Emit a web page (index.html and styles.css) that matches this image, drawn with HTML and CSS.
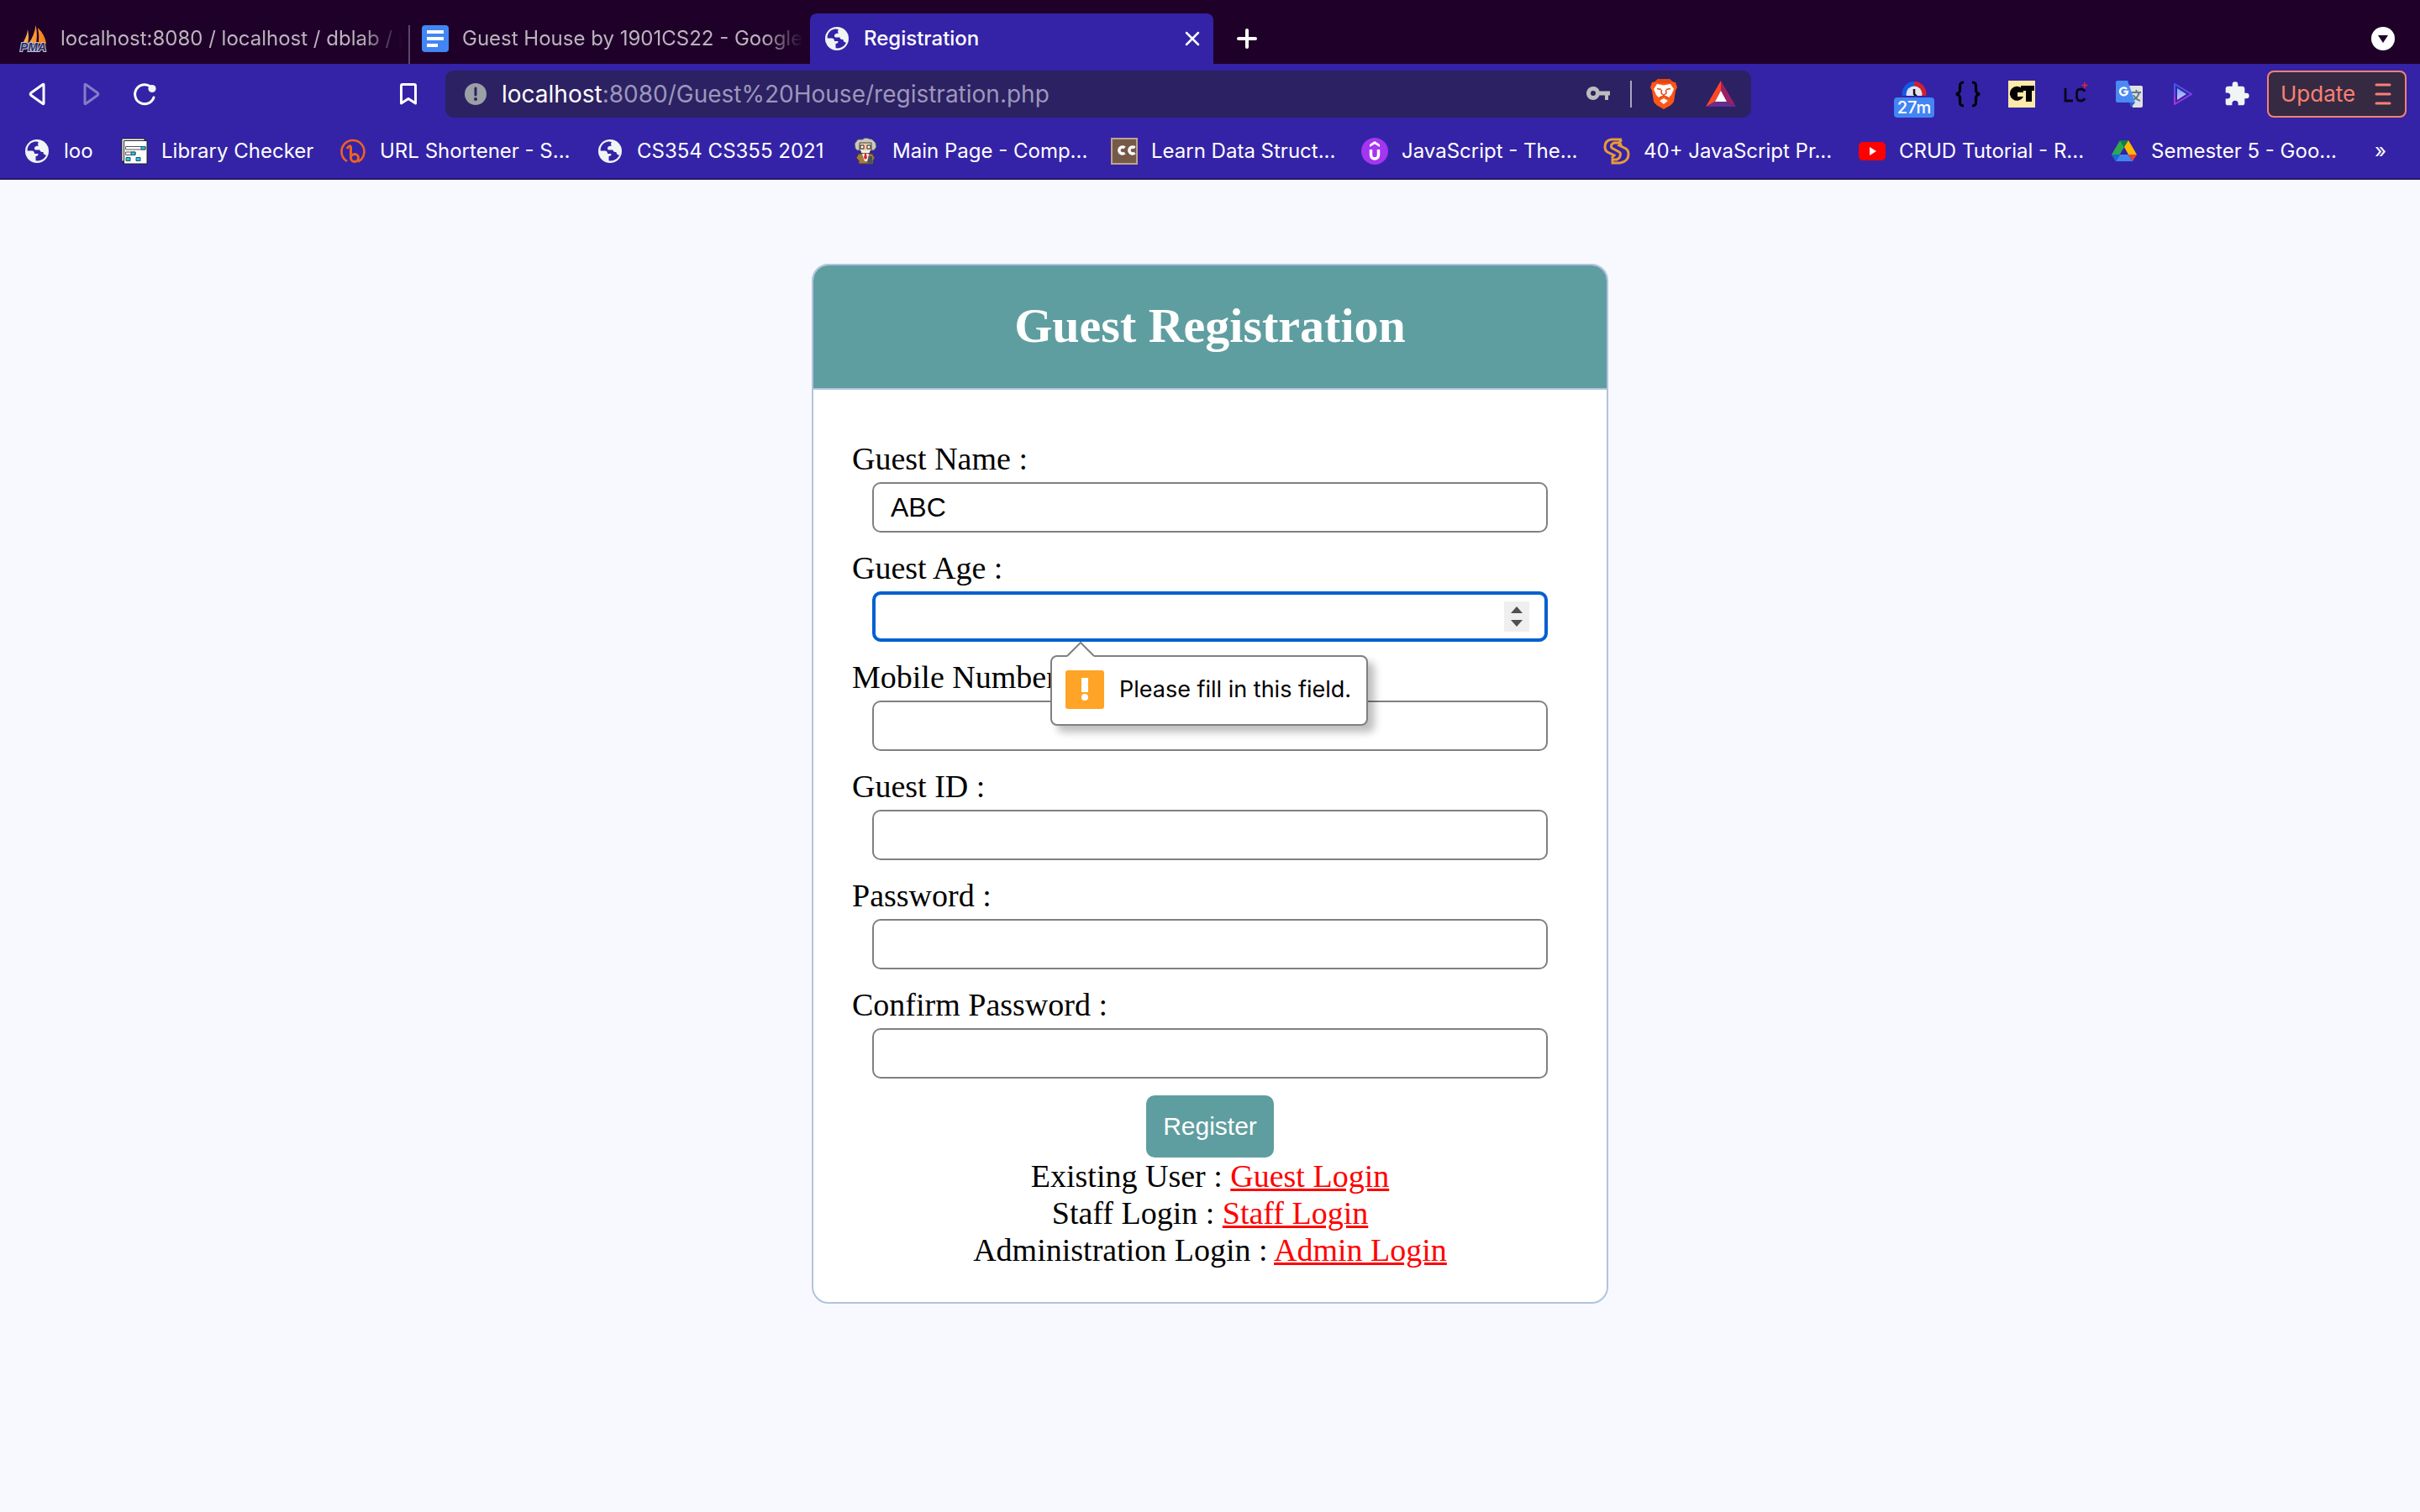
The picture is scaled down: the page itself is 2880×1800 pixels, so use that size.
FILE: index.html
```html
<!DOCTYPE html>
<html lang="en">
<head>
<meta charset="utf-8">
<title>Registration</title>
<link rel="stylesheet" href="styles.css">
</head>
<body>
<svg class="defs" aria-hidden="true">
  <symbol id="globe" viewBox="0 0 32 32">
    <circle cx="16" cy="16" r="14" fill="#f1f3f4"/>
    <path fill="var(--hole)" d="M14 4.500C8 5 4.400 10 4.600 15.500L10 15.500C12 15.500 13 17 13 19L17.500 19C17.500 21 16.500 22 14.500 22L14.500 27.300C20 28.200 25.500 25 27 20.500C25.500 20.500 24 20 23.500 18L23.500 17C21 17 19.500 16.500 19.500 14.500L14 14.500C12.500 13.500 12.500 11 15 10L18 9.500C17 8.500 16.500 6.500 18 5.200C16.500 4.500 15.500 4.400 14 4.500Z"/>
  </symbol>
</svg>

<header class="browser">
  <nav class="tabs" aria-label="Tabs">
    <a class="tab" href="#dblab">
      <svg class="icon spill" viewBox="0 0 32 32"><defs><linearGradient id="sail"><stop offset="0" stop-color="#ffb45c"/><stop offset="1" stop-color="#f57c10"/></linearGradient></defs><path fill="url(#sail)" d="M2 23Q8 14 9 5Q11 14 9 22ZM10 22Q17 12 18.500 0Q21 10 19 22ZM21 3Q30 12 31 22L22 22Q23 12 21 3Z"/><text x="0" y="31" class="pma">PMA</text></svg>
      <span class="tab-title">localhost:8080 / localhost / dblab / p</span>
    </a>
    <a class="tab tab-split" href="#docs">
      <svg class="icon" viewBox="0 0 32 32"><rect width="32" height="32" rx="4" fill="#4285f4"/><path fill="#fff" d="M6 6h20v4H6zM6 14h20v4H6zM6 22h13v4H6z"/></svg>
      <span class="tab-title">Guest House by 1901CS22 - Google</span>
    </a>
    <div class="tab tab-active">
      <svg class="icon"><use href="#globe"/></svg>
      <span class="tab-title">Registration</span>
      <button class="plain" type="button" aria-label="Close tab"><svg class="close" viewBox="0 0 18 18"><path d="M2 2L16 16M16 2L2 16" stroke="#fff" stroke-width="2.500" stroke-linecap="round"/></svg></button>
    </div>
    <button class="plain new-tab" type="button" aria-label="New tab"><svg class="plus" viewBox="0 0 24 24"><path d="M12 2V22M2 12H22" stroke="#fff" stroke-width="4" stroke-linecap="round"/></svg></button>
    <button class="plain tab-search" type="button" aria-label="Search tabs"><svg class="round" viewBox="0 0 28 28"><circle cx="14" cy="14" r="14" fill="#fff"/><path d="M8 10H20L14 19Z" fill="#1f0029"/></svg></button>
  </nav>

  <div class="toolbar">
    <div class="nav-side">
      <button class="plain" type="button" aria-label="Back"><svg class="icon" viewBox="0 0 32 32"><path d="M24 5V27Q24 28 23 27.500L9 17.500Q7.500 16 9 14.500L23 4.500Q24 4 24 5Z" fill="none" stroke="#fff" stroke-width="3" stroke-linejoin="round"/></svg></button>
      <button class="plain dim" type="button" aria-label="Forward"><svg class="icon" viewBox="0 0 32 32"><path d="M9 5V27Q9 28 10 27.500L24 17.500Q25.500 16 24 14.500L10 4.500Q9 4 9 5Z" fill="none" stroke="#fff" stroke-width="3" stroke-linejoin="round"/></svg></button>
      <button class="plain" type="button" aria-label="Reload"><svg class="icon" viewBox="0 0 32 32"><path d="M23 7A11.500 11.500 0 1 0 27 20" fill="none" stroke="#fff" stroke-width="3" stroke-linecap="round"/><circle cx="25" cy="9.500" r="4.600" fill="#f1f3f4"/></svg></button>
      <button class="plain mark" type="button" aria-label="Bookmark this page"><svg class="icon" viewBox="0 0 32 32"><path d="M7.500 27V6Q7.500 4.500 9 4.500H23Q24.500 4.500 24.500 6V27L16 21.500Z" fill="none" stroke="#fff" stroke-width="3" stroke-linejoin="round"/></svg></button>
    </div>
    <div class="address">
      <svg class="info" viewBox="0 0 26 26"><circle cx="13" cy="13" r="13" fill="#9aa0a6"/><path d="M13 6V14" stroke="#2c2163" stroke-width="3" stroke-linecap="round"/><circle cx="13" cy="19" r="2" fill="#2c2163"/></svg>
      <span class="url"><b>localhost</b>:8080/Guest%20House/registration.php</span>
      <svg class="icon" viewBox="0 0 32 32"><path fill="#bcbcbc" fill-rule="evenodd" d="M10 7a8 8 0 1 0 7.500 10.500H24V23h4v-5.500h2v-5H17.500A8 8 0 0 0 10 7ZM10 12a3 3 0 1 1 0 6a3 3 0 0 1 0-6Z"/></svg>
      <span class="rule"></span>
      <svg class="brave" viewBox="0 0 32 36"><path fill="#ff5517" d="M9 0H23L27 3.500L30 4L32 10L30 14L28 27Q27 29 24 31.500L16 36L8 31.500Q5 29 4 27L2 14L0 10L2 4L5 3.500Z"/><path fill="#e8450f" d="M9 0H23L27 4L22 5H10L5 4Z"/><path fill="#fff" d="M8 6L16 7.500L24 6L28 12L25 19L22 22L16 21L10 22L7 19L4 12ZM16 23L21 26L16 30L11 26Z"/><path d="M8 11.500L13 12.500M24 11.500L19 12.500M13.500 13L13 17L16 19.500L19 17L18.500 13M11 22L16 20L21 22" fill="none" stroke="#e8450f" stroke-width="1.500"/></svg>
      <svg class="bat" viewBox="0 0 36 32"><path fill="#ff4724" d="M18 0V12L11 25L0 31Z"/><path fill="#9e1f63" d="M18 0V12L25 25L36 31Z"/><path fill="#662d91" d="M0 31L11 25H25L36 31Z"/><path fill="#fff" d="M18 12L25 25H11Z"/></svg>
    </div>
    <div class="ext-side">
      <button class="plain timer" type="button" aria-label="Timer"><svg class="icon" viewBox="0 0 32 32"><path fill="#1558e0" d="M16 1A14.500 14.500 0 0 0 16 30Z"/><path fill="#cf2130" d="M16 1A14.500 14.500 0 0 1 16 30Z"/><circle cx="16" cy="16" r="9.500" fill="#e2e2f4"/><path d="M16 10V16L19 19" stroke="#111" stroke-width="2.500" fill="none"/></svg><span class="badge">27m</span></button>
      <button class="plain" type="button" aria-label="JSON formatter"><svg class="icon" viewBox="0 0 32 32"><path d="M11 2Q6 2 6.500 7V11Q6.500 15 2 16Q6.500 17 6.500 21V25Q6 30 11 30M21 2Q26 2 25.500 7V11Q25.500 15 30 16Q25.500 17 25.500 21V25Q26 30 21 30" fill="none" stroke="#000" stroke-width="3.200"/></svg></button>
      <button class="plain" type="button" aria-label="CT"><svg class="icon" viewBox="0 0 32 32"><rect width="32" height="32" fill="#ffe9a8"/><path d="M17 10A8.500 8.500 0 1 0 18 19H11V14H18Z"/><path d="M15 6H31V12H28V25H21V12H15Z"/></svg></button>
      <button class="plain" type="button" aria-label="LC"><svg class="icon" viewBox="0 0 32 32"><path d="M4 9V24H13M27 13Q26 10 22 10Q17.500 10 17.500 15V19Q17.500 24 22 24Q26 24 27 21" fill="none" stroke="#0b0618" stroke-width="2.800"/><path d="M27 2V9M23.500 5.500H30.500" stroke="#f0203c" stroke-width="1.500"/></svg></button>
      <button class="plain" type="button" aria-label="Translate"><svg class="icon" viewBox="0 0 32 32"><path fill="#dfe1e3" d="M14 6H30Q32 6 32 8V30Q32 32 30 32H20Z"/><path d="M19 14H30M24.500 11V14M28 14Q26 21 19 24M21 17Q23 22 29 24" stroke="#607988" stroke-width="2" fill="none"/><path fill="#2c5fc4" d="M16 26H23L18 32Z"/><path fill="#4a8af4" d="M2 0H14L23 26H2Q0 26 0 24V2Q0 0 2 0Z"/><path d="M13 10A4.500 4.500 0 1 0 14 13H9.500" stroke="#fff" stroke-width="2.400" fill="none"/></svg></button>
      <button class="plain" type="button" aria-label="Player"><svg class="icon" viewBox="0 0 32 32"><defs><linearGradient id="play" x2="0" y2="1"><stop offset="0" stop-color="#3d5bf0"/><stop offset="1" stop-color="#b32ee0"/></linearGradient><linearGradient id="core" x2="0" y2="1"><stop offset="0" stop-color="#5ab4ff"/><stop offset="1" stop-color="#e7b5ff"/></linearGradient></defs><path d="M6 4L26 16L6 28Z" fill="none" stroke="url(#play)" stroke-width="2" stroke-linejoin="round"/><path d="M9 9L20 16L9 23Z" fill="url(#core)"/></svg></button>
      <button class="plain" type="button" aria-label="Extensions"><svg class="icon" viewBox="0 0 24 24"><path fill="#f1f3f4" d="M20.500 11H19V7c0-1.100-.9-2-2-2h-4V3.500a2.500 2.500 0 0 0-5 0V5H4c-1.100 0-2 .9-2 2v3.800h1.500a2.700 2.700 0 0 1 0 5.400H2V20c0 1.100.9 2 2 2h3.800v-1.500a2.700 2.700 0 0 1 5.400 0V22H17c1.100 0 2-.9 2-2v-4h1.500a2.500 2.500 0 0 0 0-5Z"/></svg></button>
      <button class="update" type="button">Update <svg class="menu" viewBox="0 0 20 28"><path d="M2 3H18M2 14H18M2 25H18" stroke="#fb8074" stroke-width="3" stroke-linecap="round"/></svg></button>
    </div>
  </div>

  <nav class="bookmarks" aria-label="Bookmarks">
    <a href="#loo"><svg class="icon"><use href="#globe"/></svg>loo</a>
    <a href="#library"><svg class="icon" viewBox="0 0 32 32"><path fill="#fff" stroke="#222" d="M1 1H28V28H1Z"/><path fill="#fff" stroke="#222" d="M3.500 3.500H31V31H3.500Z"/><path fill="#fff" stroke="#555" d="M5.500 10.500H29V14H5.500ZM5.500 17H17V20.500H5.500Z"/><path fill="#22c8e4" stroke="#256" d="M24 10.500H29V14H24ZM12 17H17V20.500H12ZM6 23.500H11V27.500H6ZM18 23.500H23V27.500H18Z"/></svg>Library Checker</a>
    <a href="#url"><svg class="icon" viewBox="0 0 32 32"><path d="M9 28A13.500 13.500 0 1 1 22 28.500" fill="none" stroke="#ee6123" stroke-width="2.600"/><path d="M9 13Q12 8 13.500 11V24A4.500 4.500 0 1 0 18 19.500Q15.500 19.500 13.500 22" fill="none" stroke="#ee6123" stroke-width="3"/></svg>URL Shortener - S...</a>
    <a href="#cs354"><svg class="icon"><use href="#globe"/></svg>CS354 CS355 2021</a>
    <a href="#comp"><svg class="icon" viewBox="0 0 32 32"><path fill="#c8c8c8" stroke="#555" d="M4 13L3 7L7 2L12 2L16 0L24 2L28 6L29 11L26 15H6Z"/><path fill="#f4c9a2" stroke="#443" d="M9 6H23V15L19 19H13L9 15Z"/><path fill="#fff" stroke="#222" d="M10 9H14V13H10ZM18 9H22V13H18Z"/><path fill="#eee" d="M11 15H21V18H11Z"/><path fill="#a8793c" stroke="#443" d="M8 19H24L27 24L25 27V31H8V27L5 24Z"/><path fill="#fff" d="M12 19H20L18 28H15Z"/><path fill="#d22" d="M15 19H17L18 24L16 26L14 24Z"/><path fill="#456" d="M20 22H24V30H18Z"/></svg>Main Page - Comp...</a>
    <a href="#learn"><svg class="icon" viewBox="0 0 32 32"><rect x="1" y="1" width="30" height="30" fill="#755a48" stroke="#bea390" stroke-width="2"/><path d="M16.500 12A4 4 0 1 0 16.500 18M28.500 12A4 4 0 1 0 28.500 18" fill="none" stroke="#fff" stroke-width="3.500"/></svg>Learn Data Struct...</a>
    <a href="#js"><svg class="icon" viewBox="0 0 32 32"><circle cx="16" cy="16" r="16" fill="#a435f0"/><path fill="#fff" d="M16 4L22 8V11L16 7.500L10 11V8Z"/><path d="M11.500 14V20.500A4.500 4.500 0 0 0 20.500 20.500V14" fill="none" stroke="#fff" stroke-width="3.500"/></svg>JavaScript - The...</a>
    <a href="#projects"><svg class="icon" viewBox="0 0 32 32"><path d="M22 2H10Q2 3 2 11Q2 15 5 17L13 21L10 24M22 2L19 6H13Q8 8 10 12L19 17Q22 19 19 24L16 26H11V30H20Q30 28 30 20Q30 15 27 13L19 9L22 7" fill="none" stroke="#e79b38" stroke-width="3"/></svg>40+ JavaScript Pr...</a>
    <a href="#crud"><svg class="icon" viewBox="0 0 32 32"><rect y="5" width="32" height="22" rx="5" fill="#f00"/><path fill="#fff" d="M13 11L21 16L13 21Z"/></svg>CRUD Tutorial - R...</a>
    <a href="#semester"><svg class="icon" viewBox="0 0 32 32"><path fill="#2da94f" d="M11 3L1 20L6 28L16 11Z"/><path fill="#0b8043" d="M11 3H21L16 11Z"/><path fill="#ffba00" d="M21 3L31 20H21L16 11Z"/><path fill="#4285f4" d="M6 28L11 20H21L26 28Z"/><path fill="#1967d2" d="M1 20H11L6 28Z"/><path fill="#ea4335" d="M21 20H31L26 28Z"/></svg>Semester 5 - Goo...</a>
    <button class="plain more" type="button" aria-label="More bookmarks">»</button>
  </nav>
</header>

<main class="page">
  <section class="card">
    <h1 class="card-title">Guest Registration</h1>
    <form class="form" action="#" method="post" novalidate>
      <div class="field">
        <label for="name">Guest Name :</label>
        <div class="control"><input id="name" type="text" value="ABC"></div>
      </div>
      <div class="field">
        <label for="age">Guest Age :</label>
        <div class="control">
          <input id="age" class="current" type="number" required>
          <svg class="spinner" viewBox="0 0 30 36" aria-hidden="true"><rect width="30" height="36" rx="1" fill="#efefef"/><path fill="#505050" d="M8 14L15 6L22 14ZM8 22H22L15 30Z"/></svg>
          <div class="hint" role="alert">
            <svg class="pointer" viewBox="0 0 32 18" aria-hidden="true"><path d="M0 17L16 1L32 17V18H0Z" fill="#fff"/><path d="M0 17L16 1L32 17" fill="none" stroke="#808080" stroke-width="2"/></svg>
            <svg class="warn" viewBox="0 0 46 46"><rect width="46" height="46" rx="3" fill="#ffa426"/><path fill="#fff" d="M19 9H27V26H19Z"/><circle cx="23" cy="32" r="4" fill="#fff"/></svg>
            Please fill in this field.
          </div>
        </div>
      </div>
      <div class="field">
        <label for="mobile">Mobile Number :</label>
        <div class="control"><input id="mobile" type="text"></div>
      </div>
      <div class="field">
        <label for="guest-id">Guest ID :</label>
        <div class="control"><input id="guest-id" type="text"></div>
      </div>
      <div class="field">
        <label for="password">Password :</label>
        <div class="control"><input id="password" type="password"></div>
      </div>
      <div class="field">
        <label for="confirm">Confirm Password :</label>
        <div class="control"><input id="confirm" type="password"></div>
      </div>
      <button class="register" type="submit">Register</button>
      <p class="links">
        Existing User : <a href="#guest">Guest Login</a><br>
        Staff Login : <a href="#staff">Staff Login</a><br>
        Administration Login : <a href="#admin">Admin Login</a>
      </p>
    </form>
  </section>
</main>
</body>
</html>
```

FILE: styles.css
```css
* { box-sizing: border-box; }

:root {
  --strip: #1f0029;
  --bar: #3423a6;
  --hole: #3423a6;
  --teal: #5f9ea0;
  --edge: #b0c4de;
}

body {
  margin: 0;
  min-height: 100vh;
  background: #f8f8ff;
  color: #000;
  font: 38px/44px "Liberation Serif", "Times New Roman", serif;
}

svg { display: block; flex: none; }
.defs { position: absolute; width: 0; height: 0; }
.icon { width: 32px; height: 32px; }
.spill { overflow: visible; }

.plain {
  display: flex;
  padding: 0;
  border: 0;
  background: none;
  color: inherit;
  font: inherit;
}

/* Browser frame */
.browser {
  background: var(--bar);
  border-bottom: 2px solid #231870;
  color: #fff;
  font: 24px/32px Inter, "Liberation Sans", sans-serif;
}
.browser a { color: inherit; text-decoration: none; }

.tabs {
  display: flex;
  height: 76px;
  padding: 16px 30px 0 8px;
  background: var(--strip);
}
.tab {
  display: flex;
  align-items: center;
  gap: 16px;
  width: 478px;
  padding: 0 8px 0 16px;
}
.tabs .tab { color: #bcb3be; }
.tab-split {
  background: linear-gradient(#5d4666, #5d4666) left bottom / 2px 46px no-repeat;
}
.tab-title {
  flex: 1;
  overflow: hidden;
  white-space: nowrap;
  mask-image: linear-gradient(to right, #000 calc(100% - 48px), transparent);
}
.tabs .tab-active {
  width: 480px;
  padding-right: 16px;
  border-radius: 8px 8px 0 0;
  background: var(--bar);
  color: #fff;
}
.tab-active .tab-title { mask-image: none; font-weight: 500; }
.close { width: 18px; height: 18px; }
.plus { width: 24px; height: 24px; }
.round { width: 28px; height: 28px; }
.new-tab { align-items: center; margin-left: 28px; }
.tab-search { align-items: center; margin-left: auto; }

.pma {
  fill: #2b3163;
  stroke: #c4c4d8;
  stroke-width: 2px;
  paint-order: stroke;
  font: italic bold 14px "Liberation Sans", sans-serif;
}

.toolbar {
  display: flex;
  align-items: center;
  height: 72px;
}
.nav-side {
  display: flex;
  gap: 32px;
  width: 530px;
  padding: 0 28px;
}
.mark { margin-left: auto; }
.dim { opacity: .4; }
.address {
  display: flex;
  flex: 1;
  align-items: center;
  height: 56px;
  padding: 0 18px 0 23px;
  border-radius: 10px;
  background: #2c2163;
  font-size: 28px;
}
.info { width: 26px; height: 26px; margin-right: 18px; }
.url { flex: 1; color: #9c97bb; }
.url b { color: #fff; font-weight: 400; }
.rule { width: 2px; height: 32px; margin: 0 22px; background: #a9a6bd; }
.brave { width: 32px; height: 36px; margin-right: 34px; }
.bat { width: 36px; height: 32px; }

.ext-side {
  display: flex;
  align-items: center;
  justify-content: flex-end;
  gap: 32px;
  width: 796px;
  padding-right: 16px;
}
.timer { position: relative; }
.badge {
  position: absolute;
  top: 20px;
  left: -8px;
  width: 48px;
  border-radius: 4px;
  background: #4285f4;
  box-shadow: 0 0 0 2px var(--bar);
  font-size: 20px;
  font-weight: 500;
  line-height: 24px;
}
.update {
  display: flex;
  align-items: center;
  justify-content: space-between;
  width: 166px;
  height: 56px;
  margin-left: -12px;
  padding: 0 16px 0 14px;
  border: 2px solid #fb8074;
  border-radius: 8px;
  background: #352a41;
  color: #fb8074;
  font: 26px/32px Inter, "Liberation Sans", sans-serif;
}
.menu { width: 20px; height: 28px; }

.bookmarks {
  display: grid;
  grid-template-columns: 116fr 260fr 306fr 304fr 308fr 298fr 288fr 304fr 300fr 314fr 26fr;
  height: 64px;
  padding: 0 28px;
  align-items: center;
}
.bookmarks a {
  display: flex;
  align-items: center;
  gap: 16px;
  white-space: nowrap;
}

/* Registration form */
.page {
  display: flex;
  justify-content: center;
  padding: 100px 40px;
}
.card {
  width: 100%;
  max-width: 948px;
  border: 2px solid var(--edge);
  border-radius: 20px;
  background: #fff;
}
.card-title {
  margin: 0;
  padding: 38px 40px 40px;
  border-bottom: 2px solid var(--edge);
  border-radius: 18px 18px 0 0;
  background: var(--teal);
  color: #fff;
  font-size: 58px;
  line-height: 68px;
  text-align: center;
}
.form {
  display: flex;
  flex-direction: column;
  gap: 20px;
  padding: 60px 46px 40px;
}
.field { display: grid; gap: 6px; }
.control { position: relative; margin: 0 24px; }
.control input {
  display: block;
  width: 100%;
  height: 60px;
  padding: 0 20px;
  border: 2px solid #808080;
  border-radius: 10px;
  outline: none;
  background: #fff;
  color: #000;
  font: 32px/36px "Liberation Sans", Arial, sans-serif;
}
.control .current { border: 4px solid #0060d0; }
.spinner {
  position: absolute;
  top: 12px;
  right: 22px;
  width: 30px;
  height: 36px;
}
.hint {
  position: absolute;
  z-index: 1;
  top: 76px;
  left: 212px;
  display: flex;
  align-items: center;
  gap: 18px;
  height: 84px;
  padding: 0 18px 2px 16px;
  border: 2px solid #808080;
  border-radius: 8px;
  background: #fff;
  box-shadow: 8px 8px 10px rgba(0, 0, 0, .25);
  font: 27px/32px Inter, "Liberation Sans", sans-serif;
  white-space: nowrap;
}
.pointer {
  position: absolute;
  top: -18px;
  left: 18px;
  width: 32px;
  height: 18px;
}
.warn { width: 46px; height: 46px; }

.register {
  align-self: center;
  height: 74px;
  padding: 0 20px;
  border: 0;
  border-radius: 10px;
  background: var(--teal);
  color: #fff;
  font: 30px/36px "Liberation Sans", Arial, sans-serif;
}
.links { margin: -20px 0 0; text-align: center; }
.links a { color: #f00; }
```
